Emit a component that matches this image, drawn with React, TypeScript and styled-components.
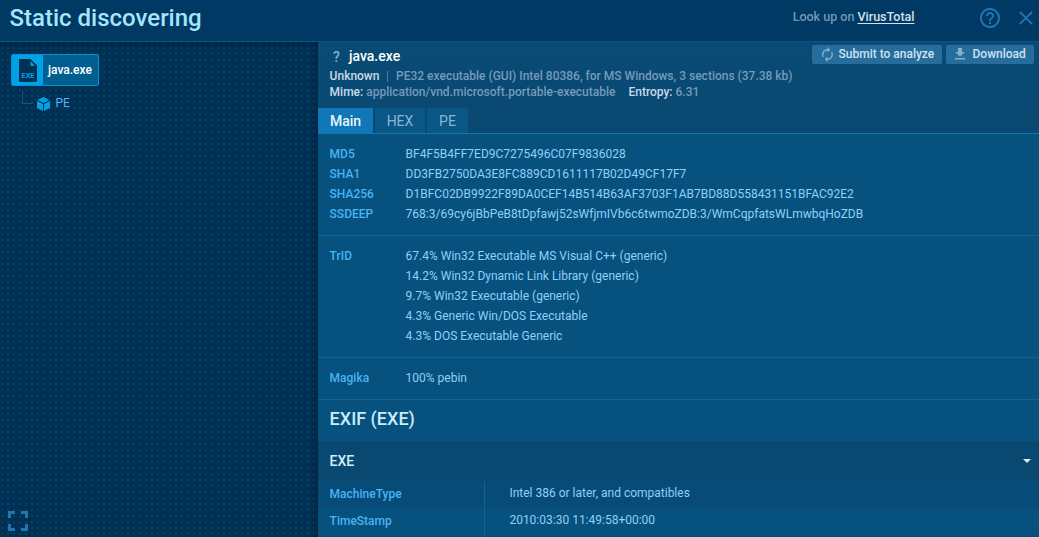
import React from "react";
import styled, { createGlobalStyle } from "styled-components";

const GlobalStyle = createGlobalStyle`
  * { box-sizing: border-box; }
  body {
    margin: 0;
    overflow: hidden;
    background: #003054;
    font-family: Roboto, "Liberation Sans", sans-serif;
    font-size: 12px;
    color: #8fd0f8;
  }
`;

const Window = styled.div`
  display: flex;
  flex-direction: column;
  height: 537px;
  width: 100%;
  overflow: hidden;
`;

const TopBar = styled.header`
  flex: none;
  height: 42px;
  display: flex;
  align-items: center;
  padding: 0 6px 6px 9.500px;
  background: #003963;
  border-bottom: 1px solid #0b5486;
`;

const Title = styled.h1`
  margin: 1px 0 0;
  flex: 1;
  font-size: 24px;
  line-height: 36px;
  font-weight: 500;
  color: #a3e7fb;
`;

const Lookup = styled.div`
  font-size: 12.500px;
  line-height: 16px;
  margin: 0 65.500px 1px 0;
  font-weight: 500;
  color: #7398b5;
`;

const LookupLink = styled.a`
  color: #d3e2ee;
  text-decoration: underline;
  text-underline-offset: 2px;
`;

const IconButton = styled.button<{ $gap?: number }>`
  display: flex;
  padding: 0;
  border: 0;
  background: none;
  color: #2277b3;
  margin-right: ${(p) => p.$gap ?? 0}px;
`;

const Body = styled.div`
  flex: 1;
  min-height: 0;
  display: flex;
`;

const Sidebar = styled.aside`
  width: 318px;
  flex: none;
  display: flex;
  flex-direction: column;
  align-items: flex-start;
  padding: 12px 0 6px 11px;
  background-color: #003054;
  background-image:
    linear-gradient(to left, rgba(0, 20, 45, 0.35), transparent 8px),
    linear-gradient(rgba(0, 20, 45, 0.35), transparent 7px),
    radial-gradient(circle at 2px 2px, #0a4068 1.1px, transparent 1.5px);
  background-size: auto, auto, 6px 6px;
  background-position: 0 0, 0 0, 0 4px;
`;

const FileNode = styled.div`
  display: flex;
  width: 88px;
  height: 32px;
  border: 1px solid #0093d6;
  border-radius: 2px;
  background: #005f90;
  overflow: hidden;
`;

const FileIconBox = styled.div`
  width: 31px;
  flex: none;
  background: #00a2e5;
  display: flex;
  align-items: center;
  justify-content: center;
`;

const FileName = styled.span`
  padding-left: 5px;
  line-height: 30px;
  font-weight: 500;
  color: #fff;
`;

const ChildNode = styled.div`
  display: flex;
  height: 26px;
  padding: 5px 0 0 11px;
`;

const Branch = styled.i`
  width: 11px;
  height: 13px;
  margin-right: 4px;
  border-left: 1px solid #23506f;
  border-bottom: 1px solid #23506f;
`;

const ChildName = styled.span`
  margin-left: 5.500px;
  line-height: 24px;
  color: #4db5f4;
  height: 24px;
`;

const CubeSlot = styled.span`
  display: flex;
  padding-top: 5.500px;
`;

const Expand = styled.button`
  display: flex;
  padding: 0;
  border: 0;
  background: none;
  margin: auto 0 0 -3px;
`;

const Details = styled.main`
  flex: 1;
  min-width: 0;
  display: flex;
  flex-direction: column;
  background: #07517e;
`;

const Summary = styled.section`
  flex: none;
  height: 92px;
  display: flex;
  flex-direction: column;
  background: linear-gradient(#094b76, #094871);
  border-bottom: 1px solid #0f76b4;
`;

const SummaryTop = styled.div`
  display: flex;
  height: 26px;
  padding: 2px 5px 0 12px;
`;

const Unknown = styled.span`
  width: 19px;
  padding-left: 3px;
  font-size: 14px;
  line-height: 27px;
  font-weight: 500;
  color: #77b8d9;
`;

const SummaryName = styled.h2`
  flex: 1;
  margin: 0;
  font-size: 14px;
  line-height: 25px;
  font-weight: 500;
  color: #fff;
`;

const Action = styled.button<{ $width: number }>`
  display: flex;
  align-items: center;
  width: ${(p) => p.$width}px;
  height: 19px;
  margin: 1px 0 0 4px;
  padding: 0 0 1px 9px;
  border: 0;
  border-radius: 2px;
  background: #266d9c;
  color: #cfe2ef;
  font: 500 12px/18px Roboto, sans-serif;
  white-space: nowrap;
  svg { margin-right: 4px; flex: none; }
`;

const ActionText = styled.span<{ $shift: number }>`
  padding-left: ${(p) => p.$shift}px;
`;

const SummaryLine = styled.div`
  height: 16px;
  padding-left: 11.600px;
  line-height: 16px;
  font-weight: 500;
  color: #759cb9;
  white-space: pre;
  b { font-weight: 500; color: #c9dbe8; }
`;

const Divider = styled.i`
  display: inline-block;
  width: 1px;
  height: 11px;
  margin: 0 8px 0 7.600px;
  vertical-align: -2px;
  background: #4f7f9f;
`;

const Entropy = styled.span`
  margin-left: 13px;
`;

const Tabs = styled.nav`
  display: flex;
  gap: 2px;
  margin-top: auto;
`;

const Tab = styled.button<{ $width: number; $active?: boolean }>`
  width: ${(p) => p.$width}px;
  height: 25px;
  padding: 1px 0 0;
  border: 0;
  background: ${(p) => (p.$active ? "#1078b8" : "#0a5685")};
  color: ${(p) => (p.$active ? "#e9f6fe" : "#86b8d6")};
  font: ${(p) => (p.$active ? 500 : 400)} 14px/24px Roboto, sans-serif;
`;

const Group = styled.section`
  flex: none;
  padding: 10px 0 11px 11.600px;
  border-bottom: 1px solid #0d6299;
`;

const Field = styled.div`
  display: flex;
  line-height: 20px;
`;

const Label = styled.div`
  width: 76px;
  flex: none;
  font-weight: 500;
  color: #48b4f3;
`;

const ExifTitle = styled.h2`
  flex: none;
  margin: 0;
  height: 41px;
  padding-left: 11.600px;
  font-size: 18px;
  line-height: 38px;
  font-weight: 500;
  color: #c8ecfc;
`;

const Accordion = styled.div`
  flex: none;
  height: 40px;
  display: flex;
  align-items: center;
  justify-content: space-between;
  padding: 0 8px 0 11.600px;
  background: #094871;
  font-size: 14px;
  font-weight: 500;
  color: #d3effc;
`;

const ExifRow = styled.div<{ $shade?: boolean }>`
  flex: none;
  height: 27px;
  display: flex;
  background: ${(p) => (p.$shade ? "#074c78" : "#07517e")};
`;

const ExifKey = styled.div`
  width: 167px;
  padding-left: 11.600px;
  border-right: 1px solid #0c659d;
  line-height: 26px;
  font-weight: 500;
  color: #48b4f3;
`;

const ExifValue = styled.div`
  padding-left: 24.400px;
  line-height: 24px;
`;

const hashes = [
  ["MD5", "BF4F5B4FF7ED9C7275496C07F9836028"],
  ["SHA1", "DD3FB2750DA3E8FC889CD1611117B02D49CF17F7"],
  ["SHA256", "D1BFC02DB9922F89DA0CEF14B514B63AF3703F1AB7BD88D558431151BFAC92E2"],
  ["SSDEEP", "768:3/69cy6jBbPeB8tDpfawj52sWfjmIVb6c6twmoZDB:3/WmCqpfatsWLmwbqHoZDB"],
];

const trid = [
  "67.4% Win32 Executable MS Visual C++ (generic)",
  "14.2% Win32 Dynamic Link Library (generic)",
  "9.7% Win32 Executable (generic)",
  "4.3% Generic Win/DOS Executable",
  "4.3% DOS Executable Generic",
];

const exif = [
  ["MachineType", "Intel 386 or later, and compatibles"],
  ["TimeStamp", "2010:03:30 11:49:58+00:00"],
  ["", ""],
];

const HelpIcon = () => (
  <svg width="20" height="20" viewBox="2 2 20 20" fill="currentColor">
    <path d="M11 18h2v-2h-2v2zm1-16C6.48 2 2 6.48 2 12s4.48 10 10 10 10-4.48 10-10S17.52 2 12 2zm0 18c-4.41 0-8-3.59-8-8s3.59-8 8-8 8 3.59 8 8-3.59 8-8 8zm0-14c-2.21 0-4 1.79-4 4h2c0-1.100.9-2 2-2s2 .9 2 2c0 2-3 1.750-3 5h2c0-2.250 3-2.500 3-5 0-2.210-1.790-4-4-4z" />
  </svg>
);

const CloseIcon = () => (
  <svg width="14" height="14" viewBox="0 0 14 14" stroke="currentColor" strokeWidth="1.8">
    <path d="M.8.8 13.200 13.200M13.200.8.8 13.200" />
  </svg>
);

const ExeIcon = () => (
  <svg width="18" height="23" viewBox="0 0 18 23">
    <path fill="#003155" d="M1 0h10.500L18 6.500V22a1 1 0 0 1-1 1H1a1 1 0 0 1-1-1V1a1 1 0 0 1 1-1z" />
    <path fill="#00a2e5" d="M11.500 2v4a1 1 0 0 0 1 1H16z" />
    <text x="9" y="19" textAnchor="middle" fontFamily="Roboto, sans-serif" fontSize="6.4" fontWeight="700" textLength="13" lengthAdjust="spacingAndGlyphs" fill="#00a2e5">EXE</text>
  </svg>
);

const CubeIcon = () => (
  <svg width="13" height="14" viewBox="0 0 13 14" fill="#00a2e5">
    <path d="M6.500 0 12.500 2.900 6.500 6 .5 2.900zM0 4l6 3v7L0 11zM13 4v7l-6 3V7z" />
  </svg>
);

const SyncIcon = () => (
  <svg width="13" height="15" viewBox="3.500 1 17 22" fill="#82b0cd">
    <path d="M12 6v3l4-4-4-4v3c-4.420 0-8 3.580-8 8 0 1.570.46 3.030 1.240 4.260L6.700 14.800c-.45-.83-.7-1.790-.7-2.800 0-3.310 2.690-6 6-6zm6.760 1.740L17.300 9.200c.44.840.7 1.790.7 2.800 0 3.310-2.690 6-6 6v-3l-4 4 4 4v-3c4.420 0 8-3.580 8-8 0-1.570-.46-3.030-1.240-4.260z" />
  </svg>
);

const DownloadIcon = () => (
  <svg width="10" height="12" viewBox="0 0 10 12" fill="#82b0cd">
    <path d="M3 0h4v4h3L5 8.500 0 4h3zM0 10h10v1.500H0z" />
  </svg>
);

export default function App() {
  return (
    <Window>
      <GlobalStyle />
      <TopBar>
        <Title>Static discovering</Title>
        <Lookup>Look up on <LookupLink>VirusTotal</LookupLink></Lookup>
        <IconButton $gap={19}><HelpIcon /></IconButton>
        <IconButton><CloseIcon /></IconButton>
      </TopBar>
      <Body>
        <Sidebar>
          <FileNode>
            <FileIconBox><ExeIcon /></FileIconBox>
            <FileName>java.exe</FileName>
          </FileNode>
          <ChildNode>
            <Branch />
            <CubeSlot><CubeIcon /></CubeSlot>
            <ChildName>PE</ChildName>
          </ChildNode>
          <Expand>
            <svg width="20" height="20" viewBox="0 0 20 20" fill="none" stroke="#2375ad" strokeWidth="3">
              <path d="M1.500 7V1.500H7M13 1.500h5.500V7M18.500 13v5.500H13M7 18.500H1.500V13" />
            </svg>
          </Expand>
        </Sidebar>
        <Details>
          <Summary>
            <SummaryTop>
              <Unknown>?</Unknown>
              <SummaryName>java.exe</SummaryName>
              <Action $width={130}><SyncIcon /><ActionText $shift={0.5}>Submit to analyze</ActionText></Action>
              <Action $width={88}><DownloadIcon /><ActionText $shift={3.5}>Download</ActionText></Action>
            </SummaryTop>
            <SummaryLine><b>Unknown</b><Divider />PE32 executable (GUI) Intel 80386, for MS Windows, 3 sections (37.38 kb)</SummaryLine>
            <SummaryLine><b>Mime:</b> application/vnd.microsoft.portable-executable<Entropy><b>Entropy:</b> 6.31</Entropy></SummaryLine>
            <Tabs>
              <Tab $width={55} $active>Main</Tab>
              <Tab $width={50}>HEX</Tab>
              <Tab $width={41}>PE</Tab>
            </Tabs>
          </Summary>
          <Group>
            {hashes.map(([name, value]) => (
              <Field key={name}><Label>{name}</Label>{value}</Field>
            ))}
          </Group>
          <Group>
            <Field>
              <Label>TrID</Label>
              <div>{trid.map((line) => <div key={line}>{line}</div>)}</div>
            </Field>
          </Group>
          <Group>
            <Field><Label>Magika</Label>100% pebin</Field>
          </Group>
          <ExifTitle>EXIF (EXE)</ExifTitle>
          <Accordion>
            EXE
            <svg width="8" height="4" viewBox="0 0 8 4" fill="#d3effc"><path d="M0 0h8L4 4z" /></svg>
          </Accordion>
          {exif.map(([key, value], i) => (
            <ExifRow key={i} $shade={i % 2 === 0}>
              <ExifKey>{key}</ExifKey>
              <ExifValue>{value}</ExifValue>
            </ExifRow>
          ))}
        </Details>
      </Body>
    </Window>
  );
}
